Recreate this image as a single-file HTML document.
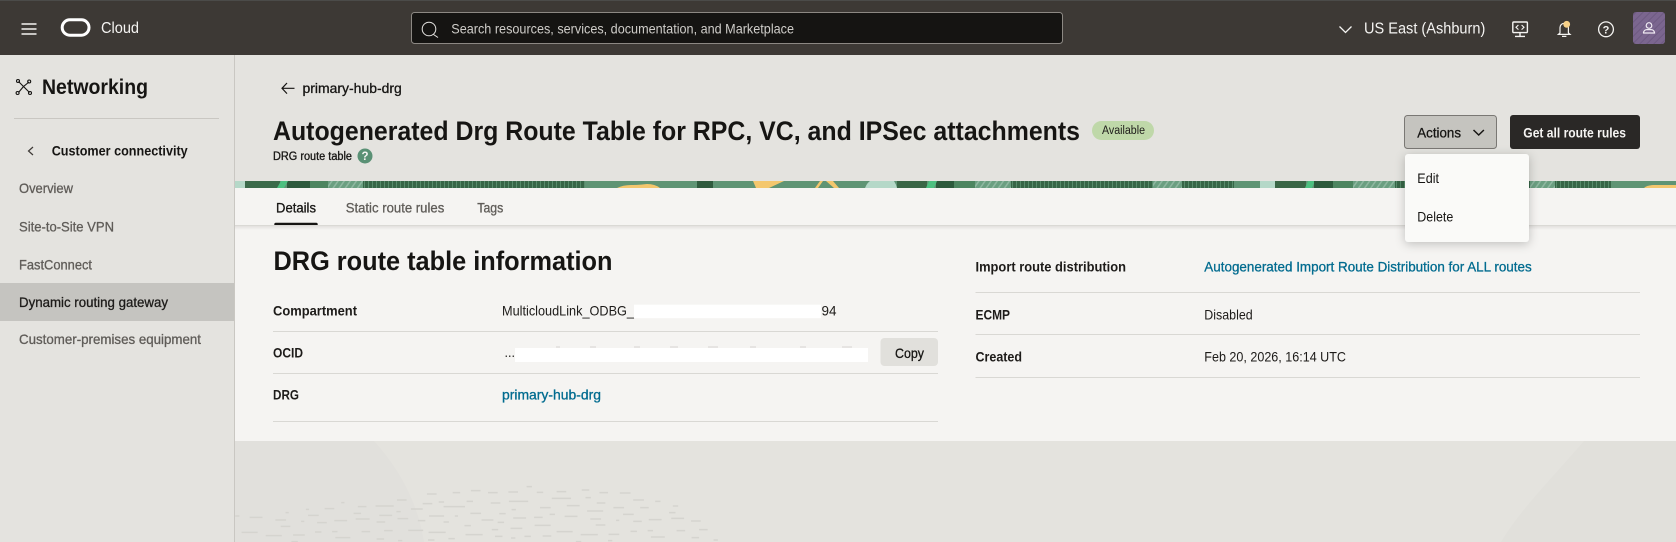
<!DOCTYPE html>
<html lang="en">
<head>
<meta charset="utf-8">
<title>Autogenerated Drg Route Table</title>
<style>
html,body{margin:0;padding:0;width:1676px;height:542px;overflow:hidden;background:#e4e3de}
svg{display:block;position:absolute;left:0;top:0}
text{font-family:"Liberation Sans",Arial,sans-serif;white-space:pre}
.b{font-weight:700}
.m{stroke:currentColor;stroke-width:.3px}
.nav{font-size:14px;fill:#5f5c58;color:#5f5c58}
.lab{font-size:14px;font-weight:700;fill:#1d1b19}
.val{font-size:14px;fill:#1d1b19}
.lnk{font-size:14px;fill:#006b8f;color:#006b8f}
</style>
</head>
<body>
<svg width="1676" height="542" viewBox="0 0 1676 542" xmlns="http://www.w3.org/2000/svg">
<defs>
<pattern id="st" width="4" height="8" patternUnits="userSpaceOnUse"><rect width="4" height="8" fill="#376647"/><rect width="1" height="8" fill="#578c6b"/></pattern>
<pattern id="lf" width="5" height="5" patternUnits="userSpaceOnUse" patternTransform="rotate(35)"><rect width="5" height="5" fill="#6b9f81"/><rect width="1.500" height="5" fill="#8fb8a1"/></pattern>
<pattern id="av" width="5" height="5" patternUnits="userSpaceOnUse" patternTransform="rotate(45)"><rect width="5" height="5" fill="#7b668f"/><rect width="1" height="5" fill="#6e5a82"/></pattern>
<linearGradient id="sh" x1="0" y1="0" x2="0" y2="1"><stop offset="0" stop-color="#dedcd9"/><stop offset="1" stop-color="#f5f4f2"/></linearGradient>
</defs>

<!-- page background -->
<rect width="1676" height="542" fill="#e4e3de"/>
<path d="M235 441H374C402 472 418 505 424 542H235Z" fill="#e1e0dc"/>
<path d="M1584 441H1676V542H1501C1520 510 1552 478 1584 441Z" fill="#e1e0db"/>
<g transform="translate(0 430) scale(.5357 .3333)" fill="none" stroke="#d5d4cf" stroke-width="4.500">
<path d="M797 192h18M845 188h14M879 182h18M911 188h18M949 186h18M983 170h10M1002 187h12M1039 185h18M1086 180h14M1119 188h16M1157 189h20M741 210h18M789 221h18M819 216h10M828 230h40M871 214h12M916 219h18M950 214h36M1030 205h36M1093 203h10M1114 219h16M1182 210h20M1223 214h10M1256 228h10M1249 248h12M701 228h34M668 230h16M637 218h6M606 236h18M571 238h6M533 248h6M575 256h20M660 250h14M740 245h8M767 237h22M801 258h28M849 258h6M878 250h20M932 251h12M955 239h8M1008 233h20M1058 227h24M1096 243h30M1145 233h20M1195 233h16M1163 253h20M439 258h8M466 262h24M514 270h20M562 274h6M592 278h18M624 272h24M664 267h26M708 256h24M742 266h20M780 272h14M703 276h16M828 276h10M899 270h22M929 277h12M958 264h24M997 262h16M1026 253h10M1054 259h24M1102 267h20M1150 271h6M1182 274h16M1211 269h24M1253 265h24M1290 273h18M524 289h18M867 287h12M953 295h22M998 286h30M1112 285h18M918 299h12M451 307h30M496 317h30M547 315h22M588 306h12M620 305h10M675 305h16M717 302h16M762 301h28M800 307h32M869 314h32M924 319h14M954 324h8M979 319h12M1013 318h16M1039 305h30M1084 314h32M1136 313h20M1177 304h12M1209 302h10M1263 302h16M1305 299h16M1215 321h26M626 323h28M1291 323h14M703 327h14M837 326h12M799 330h12M743 332h8M544 335h12M1332 330h8M1135 332h8M1075 335h10"/>
</g>

<!-- header -->
<rect width="1676" height="55" fill="#3d3935"/>
<rect width="1676" height="1" fill="#4b4b49"/>
<path d="M21.500 24h15M21.500 29h15M21.500 34h15" stroke="#f5f4f2" stroke-width="1.600" fill="none"/>
<rect x="62.200" y="19.800" width="26.800" height="15.400" rx="7.700" fill="none" stroke="#fff" stroke-width="3"/>
<text x="101" y="33" font-size="15.500" fill="#f5f4f2" textLength="38" lengthAdjust="spacingAndGlyphs">Cloud</text>
<rect x="411.500" y="12.500" width="651" height="31" rx="3" fill="#151412" stroke="#8c8883"/>
<circle cx="429" cy="29" r="6.800" fill="none" stroke="#e6e5e2" stroke-width="1"/>
<path d="M433.500 34.500l4.500 3" stroke="#e6e5e2" stroke-width="1" fill="none"/>
<text x="451.300" y="33.500" font-size="14" fill="#cfcdc9" textLength="342.700" lengthAdjust="spacingAndGlyphs">Search resources, services, documentation, and Marketplace</text>
<path d="M1339.500 26.500l6 6 6-6" fill="none" stroke="#f5f4f2" stroke-width="1.300"/>
<text x="1364" y="33.500" font-size="15.500" fill="#f5f4f2" textLength="121.300" lengthAdjust="spacingAndGlyphs">US East (Ashburn)</text>
<g fill="none" stroke="#f5f4f2" stroke-width="1.400">
<rect x="1512.800" y="22" width="14.600" height="10.600" rx="1"/>
<path d="M1520 32.600v3.600M1515 36.400h10"/>
<path d="M1518.400 25l-2.400 2.300 2.400 2.300M1521.600 25l2.400 2.300-2.400 2.300" stroke-width="1.100"/>
<path d="M1560 33v-5.500a4.200 4.200 0 0 1 8.400 0V33l1.600 1.400h-11.600zM1562 36.400h4.400" stroke-width="1.200"/>
<circle cx="1606" cy="29.300" r="7.400" stroke-width="1.300"/>
</g>
<circle cx="1566.700" cy="24.300" r="3.400" fill="#f7d188"/>
<text x="1606" y="33.300" font-size="11" class="b" fill="#f5f4f2" text-anchor="middle">?</text>
<rect x="1633" y="12" width="32" height="32" rx="3" fill="url(#av)"/>
<circle cx="1649" cy="25.500" r="2.800" fill="none" stroke="#efeaf2" stroke-width="1.200"/>
<path d="M1643.500 33v-.6a3.600 3.600 0 0 1 3.600-2.800h3.800a3.600 3.600 0 0 1 3.600 2.800v.6z" fill="none" stroke="#efeaf2" stroke-width="1.200"/>

<!-- sidebar -->
<rect x="0" y="55" width="234" height="487" fill="#e4e3df"/>
<rect x="234" y="55" width="1" height="487" fill="#c9c7c2"/>
<g stroke="#161513" stroke-width="1.100" fill="none">
<path d="M18.500 81.500l5 5 5.500-4.500M23.500 86.500l-5 6M23.500 86.500l6 6"/>
<circle cx="18" cy="81" r="1.500"/><circle cx="29.200" cy="81.500" r="1.500"/><circle cx="17.600" cy="93" r="1.500"/><circle cx="30" cy="93" r="1.500"/>
</g>
<text x="42" y="94" font-size="21" class="b" fill="#161513" textLength="106" lengthAdjust="spacingAndGlyphs">Networking</text>
<rect x="14" y="118" width="205" height="1" fill="#c9c7c2"/>
<path d="M33 147l-4.500 4 4.500 4" fill="none" stroke="#3d3935" stroke-width="1.200"/>
<text x="51.700" y="155.300" font-size="14" class="b" fill="#161513" textLength="136" lengthAdjust="spacingAndGlyphs">Customer connectivity</text>
<text x="19" y="193" class="nav m" textLength="54" lengthAdjust="spacingAndGlyphs">Overview</text>
<text x="19" y="231.300" class="nav m" textLength="95" lengthAdjust="spacingAndGlyphs">Site-to-Site VPN</text>
<text x="19" y="269.300" class="nav m" textLength="73" lengthAdjust="spacingAndGlyphs">FastConnect</text>
<rect x="0" y="283" width="234" height="38" fill="#c5c4c0"/>
<text x="19" y="307" class="nav m" style="fill:#1d1b19;color:#1d1b19" textLength="149" lengthAdjust="spacingAndGlyphs">Dynamic routing gateway</text>
<text x="19" y="344" class="nav m" textLength="182" lengthAdjust="spacingAndGlyphs">Customer-premises equipment</text>

<!-- page header -->
<rect x="235" y="55" width="1441" height="126" fill="#e4e3df"/>
<path d="M294.500 88.300H282M287 83l-5 5.300 5 5.300" fill="none" stroke="#161513" stroke-width="1.200"/>
<text x="302.500" y="93" font-size="14" class="m" fill="#161513" color="#161513" textLength="99.300" lengthAdjust="spacingAndGlyphs">primary-hub-drg</text>
<text x="273" y="140" font-size="27" class="b" fill="#161513" textLength="807" lengthAdjust="spacingAndGlyphs">Autogenerated Drg Route Table for RPC, VC, and IPSec attachments</text>
<rect x="1092" y="121" width="62" height="19" rx="9.500" fill="#bfd8a9"/>
<text x="1102" y="134" font-size="11.500" fill="#1d1b19" textLength="43" lengthAdjust="spacingAndGlyphs">Available</text>
<text x="273" y="160" font-size="11.500" class="m" fill="#161513" color="#161513" textLength="79" lengthAdjust="spacingAndGlyphs">DRG route table</text>
<circle cx="365" cy="156" r="7.500" fill="#5a9175"/>
<text x="365" y="160.200" font-size="11.500" class="b" fill="#f5f4f2" text-anchor="middle">?</text>

<!-- banner -->
<g>
<rect x="235" y="181" width="1441" height="7" fill="#5f9474"/>
<rect x="235" y="181" width="10" height="7" fill="#b5d8c8"/>
<rect x="245" y="181" width="35" height="7" fill="#3b6a4a"/>
<rect x="287" y="181" width="23" height="7" fill="#2e5a3d"/>
<path d="M281 181h7l-4 7h-7z" fill="#4dc080"/>
<rect x="310" y="181" width="18" height="7" fill="#4d8560"/>
<rect x="328" y="181" width="35" height="7" fill="url(#lf)"/>
<rect x="363" y="181" width="222" height="7" fill="url(#st)"/>
<path d="M617 188q6-3 14-3t16-1q8 0 13 4z" fill="#f4c76e"/>
<rect x="697" y="181" width="16" height="7" fill="#2f5a3d"/>
<path d="M753 181h31l-15 7h-13z" fill="#f4c76e"/>
<path d="M820 181h3l-5 7h-3zM826 181h7l6 7h-5z" fill="#f4c76e"/>
<path d="M865 188q2-5 5-7h24q2 3 3 7z" fill="#b5d8c8"/>
<rect x="897" y="181" width="30" height="7" fill="#3a6646"/>
<rect x="936" y="181" width="18" height="7" fill="#2d5a3c"/>
<path d="M929 181h8l-3 7h-8z" fill="#4dc080"/>
<rect x="954" y="181" width="21" height="7" fill="#4d8560"/>
<rect x="975" y="181" width="36" height="7" fill="url(#lf)"/>
<rect x="1011" y="181" width="142" height="7" fill="url(#st)"/>
<rect x="1153" y="181" width="29" height="7" fill="url(#lf)"/>
<rect x="1182" y="181" width="52" height="7" fill="url(#st)"/>
<rect x="1260" y="181" width="15" height="7" fill="#b5d8c8"/>
<rect x="1275" y="181" width="31" height="7" fill="#3a6646"/>
<path d="M1308 181h7l-3 7h-7z" fill="#4dc080"/>
<rect x="1314" y="181" width="19" height="7" fill="#2d5a3c"/>
<rect x="1333" y="181" width="20" height="7" fill="#4d8560"/>
<rect x="1353" y="181" width="42" height="7" fill="url(#lf)"/>
<rect x="1395" y="181" width="135" height="7" fill="url(#st)"/>
<rect x="1530" y="181" width="25" height="7" fill="url(#lf)"/>
<rect x="1555" y="181" width="56" height="7" fill="url(#st)"/>
<path d="M1644 188q3-3 10-3h22v3z" fill="#f4c76e"/>
</g>

<!-- content panel -->
<rect x="235" y="188" width="1441" height="253" fill="#f5f4f2"/>
<rect x="235" y="225" width="1441" height="5" fill="url(#sh)"/>
<rect x="235" y="225" width="1441" height="1" fill="#dad9d5"/>
<text x="276" y="212.500" font-size="14" class="m" fill="#161513" color="#161513" textLength="40" lengthAdjust="spacingAndGlyphs">Details</text>
<path d="M274.300 225v-.8a1.500 1.500 0 0 1 1.500-1.500h40.400a1.500 1.500 0 0 1 1.500 1.500v.8z" fill="#161513"/>
<text x="345.700" y="212.500" class="nav m" textLength="98.600" lengthAdjust="spacingAndGlyphs">Static route rules</text>
<text x="477.300" y="212.500" class="nav m" textLength="26" lengthAdjust="spacingAndGlyphs">Tags</text>
<text x="273.500" y="270" font-size="27" class="b" fill="#161513" textLength="339" lengthAdjust="spacingAndGlyphs">DRG route table information</text>

<!-- left table -->
<text x="273" y="315.500" class="lab" textLength="84" lengthAdjust="spacingAndGlyphs">Compartment</text>
<text x="502" y="315.500" class="val" textLength="132" lengthAdjust="spacingAndGlyphs">MulticloudLink_ODBG_</text>
<text x="821.500" y="315.500" class="val" textLength="15" lengthAdjust="spacingAndGlyphs">94</text>
<rect x="634" y="304.700" width="187" height="13.500" fill="#fff"/>
<rect x="273" y="331" width="665" height="1" fill="#d9d8d4"/>
<text x="273" y="357.500" class="lab" textLength="30" lengthAdjust="spacingAndGlyphs">OCID</text>
<text x="504.500" y="357" class="val" textLength="10.500" lengthAdjust="spacingAndGlyphs">...</text>
<path d="M556 347h4M590 347h6M634 347h6M670 347h8M708 347h10M750 347h6M800 347h6M842 347h10" stroke="#d6d5d2" stroke-width="1" fill="none"/>
<rect x="515" y="348" width="353" height="14" fill="#fff"/>
<rect x="880.500" y="338" width="57.500" height="28" rx="4" fill="#e1e0dc"/>
<text x="895" y="358" font-size="14" class="m" fill="#161513" color="#161513" textLength="29" lengthAdjust="spacingAndGlyphs">Copy</text>
<rect x="273" y="373" width="665" height="1" fill="#d9d8d4"/>
<text x="273" y="399.500" class="lab" textLength="26" lengthAdjust="spacingAndGlyphs">DRG</text>
<text x="502" y="399.500" class="lnk m" textLength="99" lengthAdjust="spacingAndGlyphs">primary-hub-drg</text>
<rect x="273" y="421" width="665" height="1" fill="#d9d8d4"/>

<!-- right table -->
<text x="975.500" y="271.500" class="lab" textLength="150.500" lengthAdjust="spacingAndGlyphs">Import route distribution</text>
<text x="1204.300" y="271.500" class="lnk m" textLength="327.400" lengthAdjust="spacingAndGlyphs">Autogenerated Import Route Distribution for ALL routes</text>
<rect x="975.500" y="292" width="664.500" height="1" fill="#d9d8d4"/>
<text x="975.500" y="319.500" class="lab" textLength="34.500" lengthAdjust="spacingAndGlyphs">ECMP</text>
<text x="1204.300" y="319.500" class="val" textLength="48.400" lengthAdjust="spacingAndGlyphs">Disabled</text>
<rect x="975.500" y="334" width="664.500" height="1" fill="#d9d8d4"/>
<text x="975.500" y="361.500" class="lab" textLength="46.500" lengthAdjust="spacingAndGlyphs">Created</text>
<text x="1204.300" y="361.500" class="val" textLength="141.700" lengthAdjust="spacingAndGlyphs">Feb 20, 2026, 16:14 UTC</text>
<rect x="975.500" y="377" width="664.500" height="1" fill="#d9d8d4"/>

<!-- action buttons -->
<rect x="1404.500" y="115.500" width="92" height="33" rx="3" fill="#c5c4bf" stroke="#7a7874"/>
<text x="1417.300" y="137.300" font-size="14" class="m" fill="#161513" color="#161513" textLength="43.700" lengthAdjust="spacingAndGlyphs">Actions</text>
<path d="M1473.500 130l5.200 5 5.200-5" fill="none" stroke="#161513" stroke-width="1.500"/>
<rect x="1510" y="115" width="130" height="34" rx="3" fill="#2a2826"/>
<text x="1523.300" y="137.300" font-size="14" class="b" fill="#f5f4f2" textLength="102.700" lengthAdjust="spacingAndGlyphs">Get all route rules</text>

<!-- dropdown -->
<rect x="1405" y="154" width="124" height="88" rx="3" fill="#fafaf8" style="filter:drop-shadow(0 2px 5px rgba(0,0,0,.22))"/>
<text x="1417.300" y="183" font-size="14" fill="#161513" textLength="21.700" lengthAdjust="spacingAndGlyphs">Edit</text>
<text x="1417.300" y="221.500" font-size="14" fill="#161513" textLength="36" lengthAdjust="spacingAndGlyphs">Delete</text>
</svg>
</body>
</html>
